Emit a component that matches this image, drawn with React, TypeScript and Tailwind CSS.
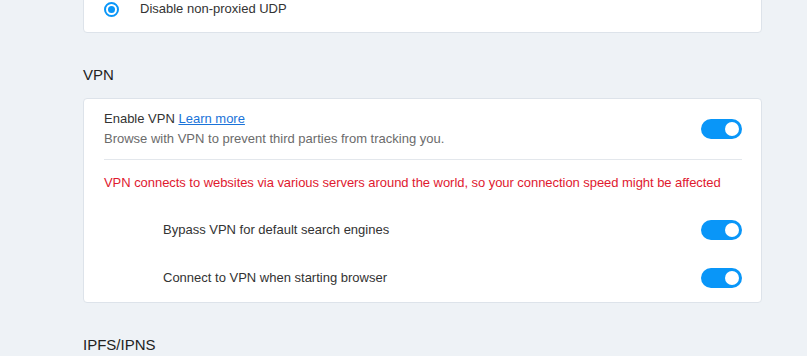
import React from "react"

function Toggle() {
  return (
    <div className="w-[41px] h-[20px] rounded-full bg-[#0996f8] flex items-center justify-end px-[3px] shrink-0">
      <div className="w-[14px] h-[14px] rounded-full bg-white" />
    </div>
  )
}

function SubRow({ label }: { label: string }) {
  return (
    <div className="h-[48px] flex items-center justify-between pl-[79px] pr-[19px]">
      <span className="text-[13px] text-[#333]">{label}</span>
      <Toggle />
    </div>
  )
}

export default function App() {
  return (
    <div
      className="w-[807px] h-[356px] overflow-hidden bg-[#eef2f6]"
      style={{ fontFamily: '"Liberation Sans", Arial, sans-serif' }}
    >
      <div className="ml-[83px] w-[679px]">
        {/* WebRTC card (cut off at top) */}
        <div className="-mt-[15px] h-[48px] bg-white rounded-[4px] border border-[#dde3ea] flex items-center px-[20px]">
          <div className="w-[15px] h-[15px] rounded-full border-[2px] border-[#0996f8] flex items-center justify-center">
            <div className="w-[7px] h-[7px] rounded-full bg-[#0996f8]" />
          </div>
          <span className="ml-[21px] text-[13px] text-[#333]">Disable non-proxied UDP</span>
        </div>

        {/* VPN */}
        <h2 className="mt-[32px] text-[15px] leading-[20px] text-[#222]">VPN</h2>
        <div className="mt-[13px] bg-white rounded-[4px] border border-[#dde3ea]">
          <div className="px-[20px] pr-[19px]">
            <div className="pt-[10px] pb-[10px] border-b border-[#e3e7ec] flex items-center justify-between">
              <div className="flex flex-col">
                <div className="text-[13px] leading-[20px] text-[#333]">
                  Enable VPN <a className="text-[#1a73d9] underline">Learn more</a>
                </div>
                <div className="text-[13px] leading-[20px] text-[#6b6b6b]">
                  Browse with VPN to prevent third parties from tracking you.
                </div>
              </div>
              <Toggle />
            </div>
            <div className="h-[46px] flex items-center text-[13px] text-[#e0192f] tracking-[-0.05px]">
              VPN connects to websites via various servers around the world, so your connection speed might be affected
            </div>
          </div>
          <SubRow label="Bypass VPN for default search engines" />
          <SubRow label="Connect to VPN when starting browser" />
        </div>

        {/* IPFS */}
        <h2 className="mt-[32px] text-[15px] leading-[20px] text-[#222]">IPFS/IPNS</h2>
      </div>
    </div>
  )
}
